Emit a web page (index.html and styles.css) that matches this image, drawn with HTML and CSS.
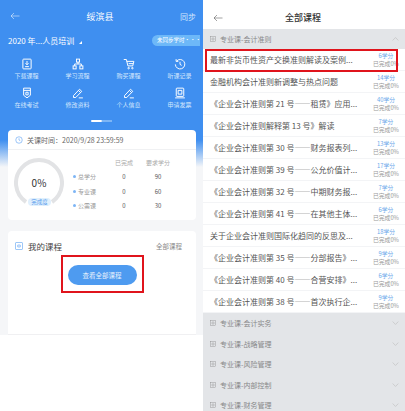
FILE: index.html
```html
<!DOCTYPE html>
<html lang="zh">
	<head>
		<meta charset="utf-8">
		<title>全部课程</title>
		<link rel="stylesheet" href="styles.css">
	</head>

	<body>
		<div class="phone left">
			<div class="topbar">
				<svg class="back" viewBox="0 0 20 14"><path d="M19 7H2M8 1L2 7l6 6"/></svg>
				<div class="title">绥滨县</div>
				<div class="sync">同步</div>
			</div>
			<div class="plan">
				<div class="plan-name">2020 年...人员培训<span class="corner"></span></div>
				<div class="pill">未同步学时···</div>
			</div>
			<div class="menu">
				<div class="menu-item">
					<svg viewBox="0 0 16 16"><rect x="2.500" y="1.500" width="11" height="13" rx="1"/><path d="M8 4v5M6 7l2 2 2-2M5.500 11.500h5"/></svg>
					<span>下载课程</span>
				</div>
				<div class="menu-item">
					<svg viewBox="0 0 16 16"><rect x="6" y="1.500" width="4" height="4"/><rect x="1.500" y="10.500" width="4" height="4"/><rect x="10.500" y="10.500" width="4" height="4"/><path d="M8 5.500V8M3.500 10.500V8h9v2.500"/></svg>
					<span>学习流程</span>
				</div>
				<div class="menu-item">
					<svg viewBox="0 0 16 16"><path d="M1 2h3.500l2 8.500h6.500l1.500-6H5"/><path d="M7.500 7.500h6"/><circle cx="7.500" cy="13.500" r="1"/><circle cx="12.500" cy="13.500" r="1"/></svg>
					<span>购买课程</span>
				</div>
				<div class="menu-item">
					<svg viewBox="0 0 16 16"><path d="M3.500 4A6.300 6.300 0 1 1 1.800 8.500M2.800 1.500V4.500h3M8 5v3.500l2.200 1.300"/></svg>
					<span>听课记录</span>
				</div>
				<div class="menu-item">
					<svg viewBox="0 0 16 16"><path d="M3.500 1.500h9v9.500L8 14.500 3.500 11z"/><path d="M3.500 4.500h9M6.500 7h3v3.500h-3z"/></svg>
					<span>在线考试</span>
				</div>
				<div class="menu-item">
					<svg viewBox="0 0 16 16"><path d="M2 11.500l8-8.500 3 2.800-8 8.200H2zM8.500 4.500l3 3M9 14.500h5.500"/></svg>
					<span>修改资料</span>
				</div>
				<div class="menu-item">
					<svg viewBox="0 0 16 16"><path d="M2 11.500l8-8.500 3 2.800-8 8.200H2zM8.500 4.500l3 3M9 14.500h5.500"/></svg>
					<span>个人信息</span>
				</div>
				<div class="menu-item">
					<svg viewBox="0 0 16 16"><rect x="3" y="1.500" width="10" height="11" rx="1"/><path d="M5.500 4.500h5v5h-5zM1.500 14.500h13"/></svg>
					<span>申请发票</span>
				</div>
			</div>
			<div class="dots"><i class="on"></i><i></i></div>

			<div class="card stats">
				<div class="deadline">
					<svg viewBox="0 0 16 16"><circle cx="8" cy="8" r="6.500"/><path d="M8 4.500V8l2.500 1.500"/></svg>
					<span>关课时间：2020/9/28 23:59:59</span>
				</div>
				<div class="stats-body">
					<div class="gauge">
						<svg viewBox="0 0 50 50"><path d="M12 44A23 23 0 1 1 38 44"/></svg>
						<div class="percent">0%</div>
						<div class="done">完成度</div>
					</div>
					<div class="table">
						<div class="cell"></div><div class="cell head">已完成</div><div class="cell head">要求学分</div>
						<div class="cell label">总学分</div><div class="cell">0</div><div class="cell">90</div>
						<div class="cell label">专业课</div><div class="cell">0</div><div class="cell">60</div>
						<div class="cell label">公需课</div><div class="cell">0</div><div class="cell">30</div>
					</div>
				</div>
			</div>

			<div class="card courses">
				<div class="courses-head">
					<div class="courses-title">
						<svg viewBox="0 0 16 16"><rect x="1.500" y="1.500" width="13" height="13"/><path d="M5.500 6h5v4h-5z"/></svg>
						<span>我的课程</span>
					</div>
					<span class="all">全部课程</span>
				</div>
				<div class="mark">
					<div class="view-btn">查看全部课程</div>
				</div>
			</div>
		</div>

		<div class="phone right">
			<div class="topbar">
				<svg class="back" viewBox="0 0 20 14"><path d="M19 7H2M8 1L2 7l6 6"/></svg>
				<div class="title">全部课程</div>
				<div class="sync"></div>
			</div>

			<div class="group open">
				<span class="group-name"><svg viewBox="0 0 12 12"><rect x="1" y="1" width="10" height="10"/><path d="M4 4h4v4H4z"/></svg>专业课-会计准则</span>
				<svg class="chev" viewBox="0 0 12 7"><path d="M1 6l5-5 5 5"/></svg>
			</div>

			<div class="row">
				<div class="name">最新非货币性资产交换准则解读及案例...</div>
				<div class="credit"><b>6学分</b><span>已完成0%</span></div>
			</div>
			<div class="row">
				<div class="name">金融机构会计准则新调整与热点问题</div>
				<div class="credit"><b>14学分</b><span>已完成0%</span></div>
			</div>
			<div class="row">
				<div class="name">《企业会计准则第 21 号——租赁》应用...</div>
				<div class="credit"><b>40学分</b><span>已完成0%</span></div>
			</div>
			<div class="row">
				<div class="name">《企业会计准则解释第 13 号》解读</div>
				<div class="credit"><b>7学分</b><span>已完成0%</span></div>
			</div>
			<div class="row">
				<div class="name">《企业会计准则第 30 号——财务报表列...</div>
				<div class="credit"><b>13学分</b><span>已完成0%</span></div>
			</div>
			<div class="row">
				<div class="name">《企业会计准则第 39 号——公允价值计...</div>
				<div class="credit"><b>17学分</b><span>已完成0%</span></div>
			</div>
			<div class="row">
				<div class="name">《企业会计准则第 32 号——中期财务报...</div>
				<div class="credit"><b>7学分</b><span>已完成0%</span></div>
			</div>
			<div class="row">
				<div class="name">《企业会计准则第 41 号——在其他主体...</div>
				<div class="credit"><b>6学分</b><span>已完成0%</span></div>
			</div>
			<div class="row">
				<div class="name">关于企业会计准则国际化趋同的反思及...</div>
				<div class="credit"><b>18学分</b><span>已完成0%</span></div>
			</div>
			<div class="row">
				<div class="name">《企业会计准则第 35 号——分部报告》...</div>
				<div class="credit"><b>9学分</b><span>已完成0%</span></div>
			</div>
			<div class="row">
				<div class="name">《企业会计准则第 40 号——合营安排》...</div>
				<div class="credit"><b>6学分</b><span>已完成0%</span></div>
			</div>
			<div class="row">
				<div class="name">《企业会计准则第 38 号——首次执行企...</div>
				<div class="credit"><b>9学分</b><span>已完成0%</span></div>
			</div>

			<div class="group">
				<span class="group-name"><svg viewBox="0 0 12 12"><rect x="1" y="1" width="10" height="10"/><path d="M4 4h4v4H4z"/></svg>专业课-会计实务</span>
				<svg class="chev" viewBox="0 0 12 7"><path d="M1 1l5 5 5-5"/></svg>
			</div>
			<div class="group">
				<span class="group-name"><svg viewBox="0 0 12 12"><rect x="1" y="1" width="10" height="10"/><path d="M4 4h4v4H4z"/></svg>专业课-战略管理</span>
				<svg class="chev" viewBox="0 0 12 7"><path d="M1 1l5 5 5-5"/></svg>
			</div>
			<div class="group">
				<span class="group-name"><svg viewBox="0 0 12 12"><rect x="1" y="1" width="10" height="10"/><path d="M4 4h4v4H4z"/></svg>专业课-风险管理</span>
				<svg class="chev" viewBox="0 0 12 7"><path d="M1 1l5 5 5-5"/></svg>
			</div>
			<div class="group">
				<span class="group-name"><svg viewBox="0 0 12 12"><rect x="1" y="1" width="10" height="10"/><path d="M4 4h4v4H4z"/></svg>专业课-内部控制</span>
				<svg class="chev" viewBox="0 0 12 7"><path d="M1 1l5 5 5-5"/></svg>
			</div>
			<div class="group">
				<span class="group-name"><svg viewBox="0 0 12 12"><rect x="1" y="1" width="10" height="10"/><path d="M4 4h4v4H4z"/></svg>专业课-财务管理</span>
				<svg class="chev" viewBox="0 0 12 7"><path d="M1 1l5 5 5-5"/></svg>
			</div>

			<div class="highlight"></div>
		</div>
	</body>
</html>
```

FILE: styles.css
```css
html {
	height: 100%;
	overflow: hidden;
}

body {
	margin: 0;
	width: 405px;
	height: 411px;
	display: flex;
	background: white;
	overflow: hidden;
	font-family: "Noto Sans CJK SC", "Liberation Sans", sans-serif;
	color: #444;
}

.phone {
	height: 411px;
	overflow: hidden;
	flex-shrink: 0;
}

svg {
	fill: none;
	stroke: currentColor;
	stroke-width: 1;
}

/* left screen */

.phone.left {
	width: 203px;
	color: white;
	background: linear-gradient(#3f8ff0 0, #3f8ff0 140px, #f5f6f8 167px, #f5f6f8 335px, white 335px);
}

.topbar {
	height: 32px;
	padding: 0 7px 0 10px;
	display: flex;
	align-items: center;
	justify-content: space-between;
}

.back {
	width: 10px;
	height: 8px;
}

.title {
	font-size: 9px;
}

.sync {
	font-size: 8px;
	width: 16px;
	white-space: nowrap;
	color: #d4e7fd;
}

.plan {
	height: 11px;
	margin-top: 3px;
	display: flex;
	align-items: center;
	justify-content: space-between;
	padding-right: 3px;
}

.plan-name {
	font-size: 8px;
	padding-left: 8px;
}

.corner {
	display: inline-block;
	margin-left: 5px;
	border-style: solid;
	border-width: 0 0 3px 3px;
	border-color: transparent transparent white transparent;
}

.pill {
	width: 48px;
	height: 11px;
	line-height: 11px;
	padding-left: 5px;
	background: #6db8f8;
	border-radius: 6px 0 0 6px;
	font-size: 5.500px;
	white-space: nowrap;
	box-sizing: border-box;
}

.menu {
	display: grid;
	grid-template-columns: repeat(4, 51px);
	grid-auto-rows: 29px;
	padding-left: 1px;
	margin-top: 12px;
}

.menu-item {
	display: flex;
	flex-direction: column;
	align-items: center;
	gap: 2px;
	font-size: 6px;
	line-height: 8px;
	color: #d4e7fd;
}

.menu-item svg {
	width: 12px;
	height: 12px;
	color: white;
	stroke-width: 1.300;
	flex-shrink: 0;
}

.dots {
	display: flex;
	justify-content: center;
	margin: 4px 0 8px;
}

.dots i {
	width: 10px;
	height: 2px;
	background: #7db5f5;
}

.dots i.on {
	width: 11px;
	background: white;
	border-radius: 1px;
}

.card {
	background: white;
	border-radius: 4px;
	margin: 0 7px 11px 8px;
	color: #444;
}

.stats {
	height: 90px;
}

.deadline {
	height: 19px;
	display: flex;
	align-items: center;
	gap: 4px;
	padding-left: 7px;
	font-size: 7px;
	color: #666;
	border-bottom: 1px solid #f0f1f3;
}

.deadline svg {
	width: 8px;
	height: 8px;
	color: #3d8ff0;
}

.stats-body {
	display: flex;
}

.gauge {
	width: 64px;
	height: 70px;
	position: relative;
	flex-shrink: 0;
}

.gauge svg {
	position: absolute;
	left: 6px;
	top: 8px;
	width: 50px;
	height: 50px;
	stroke: #e2e3e5;
	stroke-width: 4;
}

.percent {
	text-align: center;
	font-size: 10px;
	line-height: 14px;
	padding: 26px 2px 0 0;
	color: #333;
}

.done {
	position: absolute;
	left: 20px;
	top: 48px;
	width: 23px;
	height: 8px;
	line-height: 8px;
	text-align: center;
	font-size: 5.500px;
	color: #5b9cec;
	background: #e0f0fd;
	border-radius: 4px;
}

.table {
	display: grid;
	grid-template-columns: 35px 34px 34px;
	grid-auto-rows: 14.500px;
	padding-top: 5px;
	font-size: 6px;
	align-items: center;
	justify-items: center;
	color: #555;
}

.cell.head {
	color: #aaa;
	white-space: nowrap;
}

.cell.label {
	justify-self: start;
	color: #999;
	display: flex;
	align-items: center;
	gap: 2px;
	padding-left: 1px;
}

.cell.label::before {
	content: "";
	width: 3px;
	height: 3px;
	border-radius: 50%;
	background: #7db5f5;
}

.courses {
	height: 104px;
	margin-bottom: 0;
	box-sizing: border-box;
	border-radius: 4px 4px 0 0;
	border-bottom: 1px solid #f0f0f2;
}

.courses-head {
	height: 14px;
	padding: 8px 14px 0 7px;
	display: flex;
	align-items: center;
	justify-content: space-between;
}

.courses-title {
	display: flex;
	align-items: center;
	gap: 5px;
	font-size: 8.500px;
	color: #444;
}

.courses-title svg {
	width: 8px;
	height: 8px;
	color: #3d8ff0;
}

.all {
	font-size: 6.500px;
	color: #888;
}

.mark {
	width: 83px;
	height: 38px;
	box-sizing: border-box;
	margin: 2px auto 0;
	padding-top: 2px;
	border: 2px solid #e0141c;
	display: flex;
	align-items: center;
	justify-content: center;
}

.view-btn {
	width: 69px;
	height: 20px;
	line-height: 20px;
	border-radius: 10px;
	background: #4e9bf0;
	color: #e8f2fd;
	font-size: 6.500px;
	text-align: center;
}

/* right screen */

.phone.right {
	width: 202px;
	position: relative;
}

.right .topbar {
	height: 23px;
	padding: 6px 6px 0 10px;
	color: #444;
}

.right .title {
	font-weight: 500;
	color: #333;
}

.group {
	height: 20.500px;
	background: #e3e5e8;
	display: flex;
	align-items: center;
	justify-content: space-between;
	padding: 0 6px 0 7px;
	color: #888;
	font-size: 7px;
}

.group.open {
	height: 20px;
}

.group-name {
	display: flex;
	align-items: center;
	gap: 4px;
}

.group-name svg {
	width: 6px;
	height: 6px;
	stroke-width: 0.800;
}

.chev {
	width: 7px;
	height: 4px;
	stroke: #bbb;
}

.row {
	height: 22px;
	padding-left: 7px;
	display: flex;
	align-items: center;
	justify-content: space-between;
	border-bottom: 1px solid #f3f4f6;
	box-sizing: border-box;
}

.name {
	font-size: 8px;
	color: #555;
	white-space: nowrap;
}

.credit {
	width: 30px;
	flex-shrink: 0;
	display: flex;
	flex-direction: column;
	align-items: center;
	font-size: 5.800px;
	line-height: 8px;
	white-space: nowrap;
	color: #999;
	margin-right: 4px;
}

.credit b {
	font-weight: 400;
	color: #6aa7ea;
}

.highlight {
	position: absolute;
	left: 2px;
	top: 49px;
	width: 193px;
	height: 23px;
	box-sizing: border-box;
	border: 2px solid #e0141c;
}
```
